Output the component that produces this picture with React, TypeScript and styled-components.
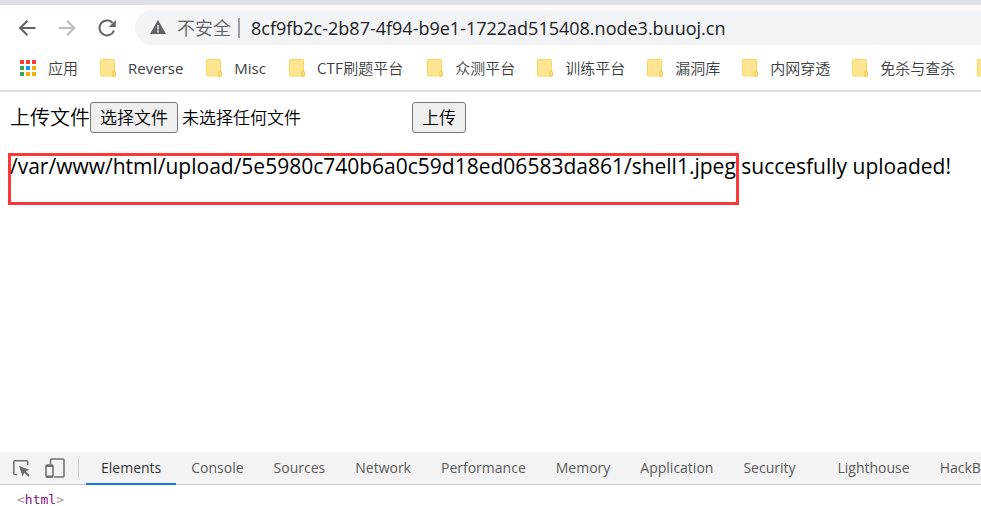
import React, { useRef, useState } from "react";
import styled, { createGlobalStyle } from "styled-components";

const GlobalStyle = createGlobalStyle`
  *, *::before, *::after { box-sizing: border-box; }
  html, body, #root { height: 100%; }
  body {
    margin: 0;
    overflow: hidden;
    background: #fff;
    color: #000;
    font-family: "Open Sans", "Noto Sans CJK SC", sans-serif;
  }
  button, input { font-family: inherit; }
  svg { display: block; flex: none; }
`;

const Window = styled.div`
  display: flex;
  flex-direction: column;
  height: 100%;
  overflow: hidden;
`;

const TabStrip = styled.div`
  flex: none;
  height: 5px;
  background: #dee1e6;
`;

const NavBar = styled.nav`
  flex: none;
  display: flex;
  align-items: center;
  padding: 5px 0 0 17px;
`;

const NavButtons = styled.div`
  display: flex;
  gap: 20px;
  margin-right: 18px;
`;

const IconButton = styled.button`
  display: flex;
  padding: 0;
  border: 0;
  background: none;
`;

const Omnibox = styled.div`
  flex: 1;
  min-width: 0;
  display: flex;
  align-items: center;
  height: 35px;
  padding-left: 15px;
  border-radius: 18px 0 0 18px;
  background: #f1f3f4;
`;

const Insecure = styled.span`
  flex: none;
  margin-left: 11px;
  padding-right: 7px;
  color: #5f6368;
  font-size: 18px;
  line-height: 20px;
  font-weight: 350;
  border-right: 2px solid #9aa0a6;
`;

const Address = styled.input`
  flex: 1;
  min-width: 0;
  margin-left: 11px;
  padding: 0;
  border: 0;
  outline: 0;
  background: none;
  color: #202124;
  font-size: 18px;
  line-height: 28px;
`;

const Bookmarks = styled.div`
  flex: none;
  display: flex;
  align-items: center;
  gap: 22px;
  height: 47px;
  padding-left: 20px;
  overflow: hidden;
  border-bottom: 2px solid #dadce0;
`;

const Bookmark = styled.a<{ $script?: "latin" | "mixed" | "han" }>`
  flex: none;
  display: flex;
  align-items: center;
  gap: 12px;
  margin-right: ${(p) => (p.$script === "latin" ? "1px" : p.$script === "mixed" ? "2px" : "0")};
  color: #3c4043;
  font-family: ${(p) => (p.$script === "latin" ? '"Open Sans"' : '"Noto Sans CJK SC"')}, sans-serif;
  font-weight: ${(p) => (p.$script === "latin" ? 400 : 350)};
  font-size: 15px;
  line-height: 20px;
  text-decoration: none;
  white-space: nowrap;
`;

const Page = styled.main`
  flex: 1;
  min-height: 0;
  padding: 10px;
  overflow: hidden;
  font-size: 20px;
  line-height: 28px;
`;

const UploadForm = styled.form`
  display: flex;
  align-items: center;
  font-weight: 350;
  white-space: nowrap;
`;

const FormButton = styled.button`
  height: 31px;
  padding: 0 9px;
  border: 1px solid #767676;
  border-radius: 3px;
  background: #efefef;
  color: #000;
  font-size: 17px;
  font-weight: inherit;
  line-height: 28px;
`;

const FileStatus = styled.output`
  width: 234px;
  padding-left: 4px;
  font-size: 17px;
  overflow: hidden;
`;

const Result = styled.p`
  margin: 19px 0 0;
  font-size: 21px;
  white-space: nowrap;
`;

const Marked = styled.span`
  position: relative;

  &::after {
    content: "";
    position: absolute;
    inset: 1px -3px -25px -2px;
    border: 3px solid #fb3838;
    pointer-events: none;
  }
`;

const DevTools = styled.section`
  flex: none;
  height: 54px;
  overflow: hidden;
`;

const ToolBar = styled.div`
  display: flex;
  align-items: center;
  height: 33px;
  padding-left: 12px;
  background: #f3f3f3;
  border-bottom: 1px solid #cacdd1;
`;

const Tools = styled.div`
  display: flex;
  align-items: center;
  gap: 15px;
  height: 20px;
  margin-right: 7px;
  padding-right: 13px;
  border-right: 1px solid #ccc;
`;

const Tab = styled.button<{ $active?: boolean; $spaced?: boolean }>`
  flex: none;
  height: 33px;
  margin-left: ${(p) => (p.$spaced ? "12px" : "0")};
  padding: 2px 15px 0;
  border: 0;
  border-bottom: 2px solid ${(p) => (p.$active ? "#1a73e8" : "transparent")};
  background: none;
  color: ${(p) => (p.$active ? "#333" : "#5a5a5a")};
  font-size: 14px;
  line-height: 20px;
`;

const Markup = styled.code`
  display: block;
  padding: 5px 17px;
  color: #a894a6;
  font-family: "DejaVu Sans Mono", monospace;
  font-size: 13px;
  line-height: 20px;
`;

const TagName = styled.span`
  color: #881280;
`;

const Folder = () => (
  <svg width="16" height="18" viewBox="0 0 16 18" aria-hidden="true">
    <path d="M1.500.500h12q1 0 1 1v15.500h-13q-1 0-1-1v-14.500q0-1 1-1z" fill="#ffe591" stroke="#f9d75b" />
    <path d="M13 17.500v-4q0-1.500 1.200-1.500t1.300 1.500v2.500q0 1.500-2.500 1.500z" fill="#ffe591" stroke="#eec643" />
  </svg>
);

const appColors = ["#ff3b30", "#ff3b30", "#ff3b30", "#34a853", "#1a8cff", "#fbad05", "#34a853", "#fbad05", "#fbad05"];

const AppsGrid = () => (
  <svg width="16" height="18" viewBox="0 0 16 18" aria-hidden="true">
    {appColors.map((c, i) => (
      <rect key={i} x={(i % 3) * 6} y={Math.floor(i / 3) * 6 + 1} width="4" height="4" fill={c} />
    ))}
  </svg>
);

const ArrowLeft = () => (
  <svg width="20" height="20" viewBox="0 0 20 20" fill="none" stroke="#5f6368" strokeWidth="2" aria-hidden="true">
    <path d="M18.500 10H4M10.500 2.700L3.200 10l7.300 7.300" />
  </svg>
);

const ArrowRight = () => (
  <svg width="20" height="20" viewBox="0 0 20 20" fill="none" stroke="#babcbe" strokeWidth="2" aria-hidden="true">
    <path d="M2 10h14.500M10 2.700l7.300 7.300-7.300 7.300" />
  </svg>
);

const Reload = () => (
  <svg width="20" height="20" viewBox="0 0 20 20" aria-hidden="true">
    <path d="M17 12.500A7.500 7.500 0 1 1 15.500 4.800" fill="none" stroke="#5f6368" strokeWidth="2" />
    <path d="M18.800 2v7h-7z" fill="#5f6368" />
  </svg>
);

const Warning = () => (
  <svg width="16" height="15" viewBox="0 0 16 15" aria-hidden="true">
    <path d="M8 0l8 14H0z" fill="#5f6368" />
    <path d="M8 5v4.500M8 10.500v2" stroke="#f1f3f4" strokeWidth="1.500" />
  </svg>
);

const Inspect = () => (
  <svg width="18" height="18" viewBox="0 0 18 18" aria-hidden="true">
    <path d="M5 15.500H2.800q-1 0-1-1V2.800q0-1 1-1h12q1 0 1 1V6" fill="none" stroke="#6e6e6e" strokeWidth="1.500" />
    <path d="M7 7l10.500 3.700-3.800 1.600 4 4-1.400 1.400-4-4L10.500 17.500z" fill="#6e6e6e" />
  </svg>
);

const Device = () => (
  <svg width="20" height="20" viewBox="0 0 20 20" fill="none" stroke="#6e6e6e" aria-hidden="true">
    <path d="M5.500 6V2q0-1 1-1h11.500q1 0 1 1v16q0 1-1 1H9" strokeWidth="1.500" />
    <rect x="1" y="7" width="7" height="12" rx="1" strokeWidth="1.500" />
    <path d="M1 8h7M1 18.500h7" strokeWidth="2" />
  </svg>
);

const folders = [
  { name: "Reverse", script: "latin" },
  { name: "Misc", script: "latin" },
  { name: "CTF刷题平台", script: "mixed" },
  { name: "众测平台", script: "han" },
  { name: "训练平台", script: "han" },
  { name: "漏洞库", script: "han" },
  { name: "内网穿透", script: "han" },
  { name: "免杀与查杀", script: "han" },
] as const;
const tabs = ["Elements", "Console", "Sources", "Network", "Performance", "Memory", "Application", "Security", "Lighthouse", "HackBar"];

export default function App() {
  const fileRef = useRef<HTMLInputElement>(null);
  const [fileName, setFileName] = useState("未选择任何文件");
  const [active, setActive] = useState("Elements");
  const [url, setUrl] = useState("8cf9fb2c-2b87-4f94-b9e1-1722ad515408.node3.buuoj.cn");

  return (
    <Window>
      <GlobalStyle />
      <TabStrip />
      <NavBar>
        <NavButtons>
          <IconButton aria-label="后退"><ArrowLeft /></IconButton>
          <IconButton aria-label="前进"><ArrowRight /></IconButton>
          <IconButton aria-label="重新加载"><Reload /></IconButton>
        </NavButtons>
        <Omnibox>
          <Warning />
          <Insecure>不安全</Insecure>
          <Address aria-label="地址" value={url} onChange={(e) => setUrl(e.target.value)} />
        </Omnibox>
      </NavBar>
      <Bookmarks>
        <Bookmark href="#apps"><AppsGrid />应用</Bookmark>
        {folders.map(({ name, script }) => (
          <Bookmark key={name} href={`#${name}`} $script={script}><Folder />{name}</Bookmark>
        ))}
        <Bookmark href="#more" aria-label="更多书签"><Folder /></Bookmark>
      </Bookmarks>
      <Page>
        <UploadForm onSubmit={(e) => e.preventDefault()}>
          <label htmlFor="upload">上传文件</label>
          <input
            id="upload"
            ref={fileRef}
            type="file"
            hidden
            onChange={(e) => setFileName(e.target.files?.[0]?.name ?? "未选择任何文件")}
          />
          <FormButton type="button" onClick={() => fileRef.current?.click()}>选择文件</FormButton>
          <FileStatus htmlFor="upload">{fileName}</FileStatus>
          <FormButton type="submit">上传</FormButton>
        </UploadForm>
        <Result>
          <Marked>/var/www/html/upload/5e5980c740b6a0c59d18ed06583da861/shell1.jpeg</Marked> succesfully uploaded!
        </Result>
      </Page>
      <DevTools>
        <ToolBar>
          <Tools>
            <IconButton aria-label="Inspect element"><Inspect /></IconButton>
            <IconButton aria-label="Toggle device toolbar"><Device /></IconButton>
          </Tools>
          {tabs.map((name) => (
            <Tab key={name} $active={name === active} $spaced={name === "Lighthouse"} onClick={() => setActive(name)}>
              {name}
            </Tab>
          ))}
        </ToolBar>
        <Markup>&lt;<TagName>html</TagName>&gt;</Markup>
      </DevTools>
    </Window>
  );
}
